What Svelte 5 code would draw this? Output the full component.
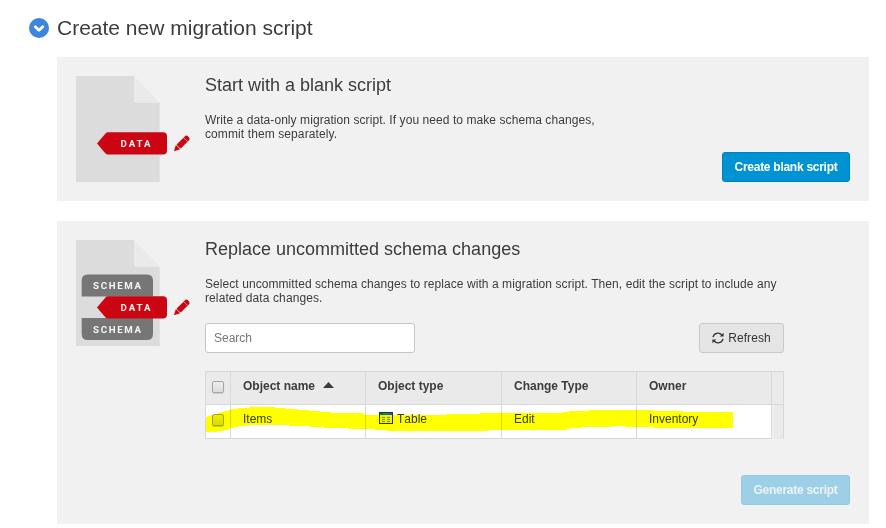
<script>
  const columns = ['Object name', 'Object type', 'Change Type', 'Owner'];
  const rows = [{ name: 'Items', type: 'Table', change: 'Edit', owner: 'Inventory' }];
</script>

{#snippet documentIcon(withSchema)}
  <svg class="document" width="116" height="106" viewBox="0 0 116 106">
    <path d="M0 0H58V26.500H83.700V106H0Z" fill="#dcdcdc" />
    <path d="M58 0L83.700 26.500H58Z" fill="#eaeaea" />
    {#if withSchema}
      <path d="M5.700 56.500V40.500Q5.700 34.500 11.700 34.500H71Q77 34.500 77 40.500V56.500Z" fill="#767676" />
      <path d="M5.700 78H77V94Q77 100 71 100H11.700Q5.700 100 5.700 94Z" fill="#767676" />
      <text x="17" y="48.800" textLength="48">SCHEMA</text>
      <text x="17" y="92.800" textLength="48">SCHEMA</text>
    {/if}
    <path d="M21 67.500L29.500 57.500Q30.500 56.300 32 56.300H87Q91 56.300 91 60.300V74.600Q91 78.600 87 78.600H32Q30.500 78.600 29.500 77.500Z" fill="#cb0612" />
    <text x="44.500" y="70.800" textLength="30">DATA</text>
    <g transform="translate(97.900 75.300) rotate(-45)" fill="#cb0612">
      <path d="M0 0L5.800 -3V3Z" />
      <path d="M6.800 -2.900H16.400V2.900H6.800Q5.800 0 6.800 -2.900Z" />
      <path d="M16.700 -2.900H18.200Q20.600 -2.900 20.600 0Q20.600 2.900 18.200 2.900H16.700Z" />
    </g>
  </svg>
{/snippet}

<main>
  <header>
    <svg width="20" height="20" viewBox="0 0 20 20">
      <circle cx="10" cy="10" r="10" fill="#3e86db" />
      <path d="M6.300 8.800L10 12.200L13.700 8.800" fill="none" stroke="#fff" stroke-width="2.900" stroke-linecap="round" stroke-linejoin="round" />
    </svg>
    <h1>Create new migration script</h1>
  </header>

  <section class="blank">
    {@render documentIcon(false)}
    <div class="content">
      <h2>Start with a blank script</h2>
      <p><span>Write a data-only migration script. If you need to make schema changes,</span><br />commit them separately.</p>
    </div>
    <button class="primary"><span>Create blank script</span></button>
  </section>

  <section class="replace">
    {@render documentIcon(true)}
    <div class="content">
      <h2>Replace uncommitted schema changes</h2>
      <p><span>Select uncommitted schema changes to replace with a migration script. Then, edit the script to include any</span><br />related data changes.</p>
      <div class="tools">
        <input type="text" placeholder="Search" />
        <button class="refresh">
          <svg width="12" height="12" viewBox="0 0 12 12" fill="none" stroke="#333" stroke-width="1.300">
            <path d="M1 5.200A5 4.900 0 0 1 9.800 3" />
            <path d="M11 6.800A5 4.900 0 0 1 2.200 9" />
            <path d="M11.600 .8V4.600H7.800Z M.4 11.200V7.400H4.200Z" fill="#333" stroke="none" />
          </svg>
          <span>Refresh</span>
        </button>
      </div>
      <div class="table">
        <div class="row head">
          <div class="check"><i></i></div>
          {#each columns as column, i}
            <div><b>{column}</b>{#if i === 0}<svg class="sort" width="11" height="6" viewBox="0 0 11 6"><path d="M0 6L5.500 0L11 6Z" fill="#3c3c3c" /></svg>{/if}</div>
          {/each}
          <div></div>
        </div>
        {#each rows as row}
          <div class="row">
            <div class="check"><i></i></div>
            <div>{row.name}</div>
            <div class="type">
              <svg width="14" height="12" viewBox="0 0 14 12">
                <defs>
                  <linearGradient id="title"><stop offset="0" stop-color="#087018" /><stop offset=".5" stop-color="#1d8a68" /><stop offset="1" stop-color="#1048f0" /></linearGradient>
                </defs>
                <rect width="14" height="12" fill="#243746" />
                <rect x="1" y="1" width="12" height="2" fill="url(#title)" />
                <rect x="1" y="3" width="12" height="8" fill="#f4f2b0" />
                <path d="M3 5.500H6M8 5.500H11M3 7.500H6M8 7.500H11M3 9.500H6M8 9.500H11" stroke="#7c9440" />
              </svg>
              <span>{row.type}</span>
            </div>
            <div>{row.change}</div>
            <div>{row.owner}</div>
            <div class="gutter"></div>
          </div>
        {/each}
        <svg class="marker" width="579" height="68" viewBox="205 371 579 68" shape-rendering="crispEdges">
          <path fill="#ff0" d="M206 417L213 415L219 413L226 411L233 409L242 408L256 407H270L279 408L292 409L315 411L336 413H364V415H447V414H480V413H562V412H569V411H589V410H653V411H683V412H733V428H653V427H626L623 426H614L610 427H592L571 428L566 430H490L485 431H386V430L364 429L332 428L301 426L277 425H256L242 426L231 428L228 430L220 431L213 432H206Z" />
        </svg>
      </div>
    </div>
    <button class="primary disabled"><span>Generate script</span></button>
  </section>
</main>

<style>
  :global(body) {
    background: #fff;
  }
  main {
    width: 886px;
    height: 528px;
    box-sizing: border-box;
    padding: 17px 17px 0 57px;
    font: 12px/14px "Liberation Sans", Arial, sans-serif;
    color: #3c3c3c;
    overflow: hidden;
  }
  header {
    display: flex;
    gap: 8px;
    height: 40px;
    margin-left: -28px;
  }
  header svg {
    margin-top: 1px;
  }
  h1, h2, p {
    margin: 0;
    font-weight: 400;
    white-space: nowrap;
  }
  h1 {
    font-size: 21px;
    line-height: 22px;
  }
  h2 {
    font-size: 18px;
    line-height: 20px;
  }
  section {
    display: flex;
    box-sizing: border-box;
    padding: 19px;
    background: #f1f1f1;
  }
  .blank {
    height: 144px;
    margin-bottom: 20px;
  }
  .replace {
    height: 303px;
  }
  .document {
    flex: none;
    margin-right: 13px;
  }
  .document text {
    font: 700 9.7px Roboto, sans-serif;
    fill: #f5f5f5;
  }
  .content {
    width: 579px;
    flex: none;
    margin-top: -1px;
  }
  p {
    margin-top: 18px;
    letter-spacing: 0.1px;
  }
  p span {
    letter-spacing: 0.07px;
  }
  button {
    box-sizing: border-box;
    height: 30px;
    padding: 0;
    border-radius: 3px;
    font: 12px/14px "Liberation Sans", Arial, sans-serif;
    white-space: nowrap;
  }
  .primary {
    flex: none;
    align-self: flex-end;
    width: 128px;
    margin-left: -62px;
    color: #fff;
    font-weight: 700;
    letter-spacing: -0.27px;
    background: #0093d3;
    border: 1px solid #0083bd;
  }
  .primary.disabled {
    width: 109px;
    margin-left: -43px;
    color: #e9f4f9;
    background: #9dcfe6;
    border-color: #94c8df;
  }
  .tools {
    display: flex;
    justify-content: space-between;
    margin-top: 18px;
  }
  input {
    box-sizing: border-box;
    width: 210px;
    height: 30px;
    padding: 0 8px;
    border: 1px solid #c6c6c6;
    border-radius: 3px;
    background: #fff;
    font: 12px "Liberation Sans", Arial, sans-serif;
  }
  input::placeholder {
    color: #777;
  }
  .refresh {
    display: flex;
    align-items: center;
    justify-content: center;
    gap: 4px;
    width: 85px;
    color: #333;
    letter-spacing: 0.1px;
    background: #e5e5e5;
    border: 1px solid #c9c9c9;
  }
  .table {
    position: relative;
    height: 68px;
    margin-top: 18px;
  }
  .row {
    display: grid;
    grid-template-columns: 25px 135px 136px 135px 135px 13px;
    height: 34px;
    background: #fff;
  }
  .row > div {
    box-sizing: border-box;
    padding: 7px 0 0 12px;
    border-left: 1px solid #d8d8d8;
    border-bottom: 1px solid #d8d8d8;
    white-space: nowrap;
  }
  .row > div:last-child {
    padding: 0;
    border-right: 1px solid #d8d8d8;
  }
  .head {
    background: #eaeaea;
  }
  .head > div {
    border-top: 1px solid #d8d8d8;
  }
  .row > .check {
    padding: 9px 0 0 6px;
  }
  .check i {
    display: block;
    box-sizing: border-box;
    width: 12px;
    height: 12px;
    border: 1px solid #a6a6a6;
    border-radius: 2px;
    background: linear-gradient(#ededed, #dcdcdc);
    box-shadow: 0 1px 1px #ccc;
  }
  .sort {
    margin: 0 0 2px 8px;
  }
  .row > .type {
    display: flex;
    gap: 4px;
    padding-left: 13px;
    font-kerning: none;
  }
  .row > .gutter {
    border-bottom: 0;
    background: linear-gradient(90deg, #f1f1f1 2px, #eaeaea 2px);
  }
  .marker {
    position: absolute;
    inset: 0;
    mix-blend-mode: multiply;
  }
</style>
